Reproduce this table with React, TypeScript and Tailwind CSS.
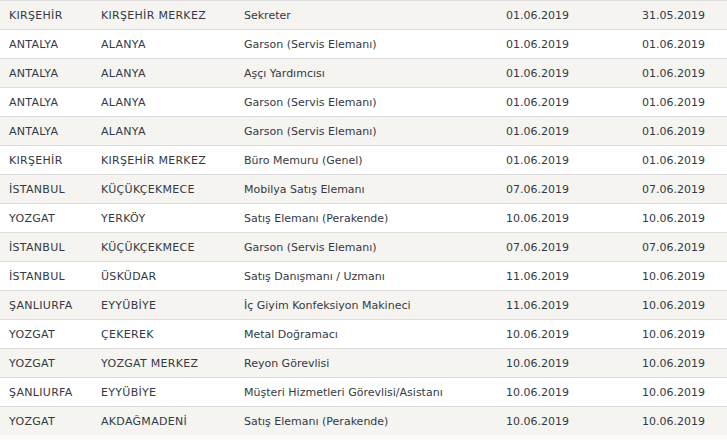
import React from "react";

const rows: [string, string, string, string, string][] = [
  ["KIRŞEHİR", "KIRŞEHİR MERKEZ", "Sekreter", "01.06.2019", "31.05.2019"],
  ["ANTALYA", "ALANYA", "Garson (Servis Elemanı)", "01.06.2019", "01.06.2019"],
  ["ANTALYA", "ALANYA", "Aşçı Yardımcısı", "01.06.2019", "01.06.2019"],
  ["ANTALYA", "ALANYA", "Garson (Servis Elemanı)", "01.06.2019", "01.06.2019"],
  ["ANTALYA", "ALANYA", "Garson (Servis Elemanı)", "01.06.2019", "01.06.2019"],
  ["KIRŞEHİR", "KIRŞEHİR MERKEZ", "Büro Memuru (Genel)", "01.06.2019", "01.06.2019"],
  ["İSTANBUL", "KÜÇÜKÇEKMECE", "Mobilya Satış Elemanı", "07.06.2019", "07.06.2019"],
  ["YOZGAT", "YERKÖY", "Satış Elemanı (Perakende)", "10.06.2019", "10.06.2019"],
  ["İSTANBUL", "KÜÇÜKÇEKMECE", "Garson (Servis Elemanı)", "07.06.2019", "07.06.2019"],
  ["İSTANBUL", "ÜSKÜDAR", "Satış Danışmanı / Uzmanı", "11.06.2019", "10.06.2019"],
  ["ŞANLIURFA", "EYYÜBİYE", "İç Giyim Konfeksiyon Makineci", "11.06.2019", "10.06.2019"],
  ["YOZGAT", "ÇEKEREK", "Metal Doğramacı", "10.06.2019", "10.06.2019"],
  ["YOZGAT", "YOZGAT MERKEZ", "Reyon Görevlisi", "10.06.2019", "10.06.2019"],
  ["ŞANLIURFA", "EYYÜBİYE", "Müşteri Hizmetleri Görevlisi/Asistanı", "10.06.2019", "10.06.2019"],
  ["YOZGAT", "AKDAĞMADENİ", "Satış Elemanı (Perakende)", "10.06.2019", "10.06.2019"],
];

export default function App() {
  return (
    <div
      className="w-[727px] h-[440px] overflow-hidden bg-[#fbfaf8] text-[11px] text-[#333a44]"
      style={{ fontFamily: '"DejaVu Sans", Verdana, sans-serif' }}
    >
      <div className="flex flex-col">
        {rows.map((r, i) => (
          <div
            key={i}
            className={`grid grid-cols-[92px_143px_262px_136px_1fr] pl-[9px] h-[29px] border-t border-[#dcdcdc] ${
              i % 2 === 0 ? "bg-[#f5f4f0]" : "bg-white"
            }`}
          >
            {r.map((c, j) => (
              <div
                key={j}
                className={`whitespace-nowrap leading-[28px] pt-px ${j < 2 ? "tracking-[0.3px]" : ""}`}
              >
                {c}
              </div>
            ))}
          </div>
        ))}
      </div>
    </div>
  );
}
